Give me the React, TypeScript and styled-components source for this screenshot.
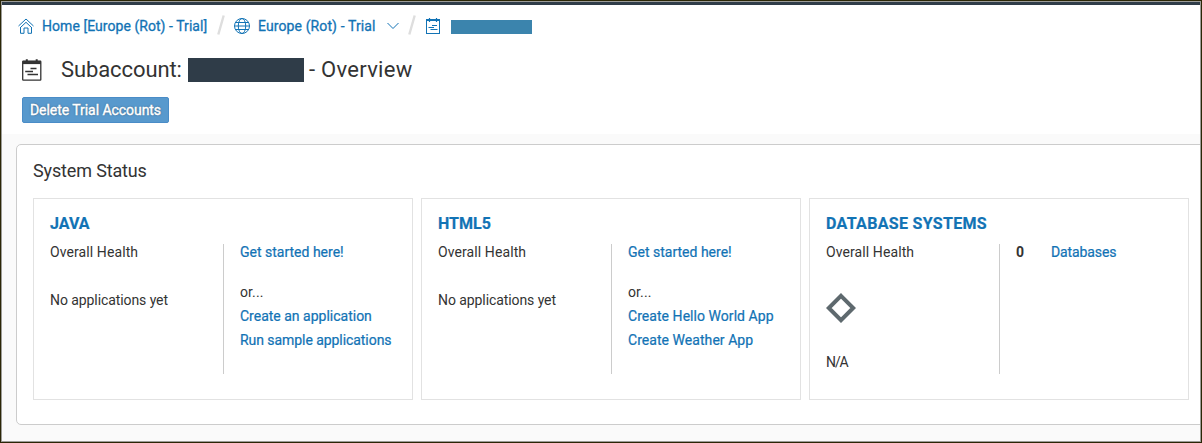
import React from "react";
import styled, { createGlobalStyle } from "styled-components";

const Global = createGlobalStyle`
  * { box-sizing: border-box; }
  body { margin: 0; background: #fff; font-family: Roboto, "Liberation Sans", sans-serif; font-size: 14px; color: #333; }
`;

const Frame = styled.div`
  height: 443px;
  border: 1px solid #2b2606;
  overflow: hidden;
`;

const Screen = styled.div`
  height: 441px;
  border: 1px solid #9c9c98;
  background: #fafafa;
  display: flex;
  flex-direction: column;
  overflow: hidden;
`;

const ShellBar = styled.div`
  height: 3px;
  flex: none;
  background: #2f3c48;
`;

const Header = styled.header`
  height: 129px;
  flex: none;
  background: #fff;
`;

const Breadcrumb = styled.nav`
  display: flex;
  align-items: center;
  height: 42px;
  padding-left: 16px;
  color: #1273b5;
`;

const Text = styled.span<{ $ls?: number }>`
  white-space: nowrap;
  letter-spacing: ${(p) => p.$ls ?? 0}px;
`;

const Crumb = styled(Text)<{ $w: number }>`
  width: ${(p) => p.$w}px;
  margin-left: 8px;
  -webkit-text-stroke: 0.3px currentColor;
`;

const Chevron = styled.svg`
  margin-left: 11px;
`;

const Separator = styled.svg`
  width: 8px;
  height: 20px;
  margin: -2px 9px 0 9px;
  flex: none;
`;

const Redacted = styled.span<{ $w: number; $h: number; $c: string; $ml?: number; $mt?: number }>`
  display: block;
  flex: none;
  width: ${(p) => p.$w}px;
  height: ${(p) => p.$h}px;
  margin-left: ${(p) => p.$ml ?? 0}px;
  margin-top: ${(p) => p.$mt ?? 0}px;
  background: ${(p) => p.$c};
`;

const TitleRow = styled.h1`
  display: flex;
  align-items: center;
  height: 44px;
  margin: 0;
  padding-left: 20px;
  font-size: 22px;
  font-weight: 400;
`;

const Title = styled(Text)<{ $ml: number; $w?: number }>`
  margin-left: ${(p) => p.$ml}px;
  ${(p) => (p.$w ? `width: ${p.$w}px;` : "")}
`;

const DeleteButton = styled.button`
  display: block;
  width: 147px;
  height: 26px;
  margin: 6px 0 0 20px;
  padding: 0;
  border: 1px solid #4a8cc7;
  border-radius: 2px;
  background: #5899cd;
  color: #fff;
  font: 14px Roboto, "Liberation Sans", sans-serif;
  letter-spacing: -0.05px;
  text-shadow: 0 0 2px rgba(0, 0, 0, 0.5);
  -webkit-text-stroke: 0.4px currentColor;
`;

const Panel = styled.section`
  margin: 10px 0 0 14px;
  width: 1200px;
  height: 281px;
  flex: none;
  border: 1px solid #ccc;
  border-radius: 5px;
  background: #fff;
  padding: 0 0 0 16px;
`;

const PanelTitle = styled.h2`
  margin: 0;
  height: 53px;
  line-height: 52px;
  font-size: 18px;
  font-weight: 400;
  letter-spacing: -0.15px;
`;

const Cards = styled.div`
  display: flex;
  gap: 8px;
`;

const Card = styled.article`
  width: 380px;
  height: 202px;
  border: 1px solid #e2e2e2;
  padding: 13px 16px 0;
`;

const CardTitle = styled.h3<{ $ls?: number }>`
  margin: 0;
  height: 24px;
  line-height: 24px;
  font-size: 16px;
  font-weight: 700;
  color: #1273b5;
  letter-spacing: ${(p) => p.$ls ?? 0}px;
  -webkit-text-stroke: 0.2px currentColor;
`;

const Columns = styled.div`
  display: flex;
  margin-top: 8px;
  height: 130px;
  line-height: 16px;
`;

const Health = styled.div`
  width: 173px;
  display: flex;
  flex-direction: column;
`;

const Details = styled.div`
  border-left: 1px solid #ccc;
  padding-left: 16px;
  display: flex;
  flex-direction: column;
`;

const Line = styled(Text)<{ $mt?: number }>`
  display: block;
  margin-top: ${(p) => p.$mt ?? 0}px;
`;

const Link = styled(Line)`
  color: #1273b5;
  -webkit-text-stroke: 0.22px currentColor;
`;

const CountRow = styled.div`
  display: flex;
`;

const Count = styled.b`
  width: 35px;
`;

const Diamond = styled.svg`
  margin-top: 33px;
`;

const Icon = styled.svg<{ $ml?: number; $mt?: number }>`
  flex: none;
  fill: none;
  margin-left: ${(p) => p.$ml ?? 0}px;
  margin-top: ${(p) => p.$mt ?? 0}px;
`;

const SmallCalendar = () => (
  <Icon $ml={1} width="14" height="16" viewBox="0 0 14 16" stroke="#1273b5">
    <rect x="0.500" y="1.500" width="13" height="14" />
    <path d="M1 2.500H13" />
    <path d="M3.500 0V4M10.500 0V4" strokeWidth="1.200" />
    <path d="M6 7.500H11M2.500 9.500H8M4.500 11.500H11.500" />
  </Icon>
);

const LargeCalendar = () => (
  <Icon $mt={2} width="20" height="22" viewBox="0 0 20 22" stroke="#333">
    <rect x="0.700" y="2.200" width="18.100" height="19" rx="0.600" strokeWidth="1.300" />
    <path d="M0.700 3.500H18.800" strokeWidth="3.200" />
    <path d="M4.800 0.200V3M14.700 0.200V3" strokeWidth="2" />
    <path d="M8.500 9.500H14.500M3.200 12.500H11M5.500 15.500H16" strokeWidth="1.300" />
  </Icon>
);

const Slash = () => (
  <Separator viewBox="0 0 8 20">
    <path d="M6.700 0.500L1.300 19.500" stroke="#dedede" strokeWidth="2.400" />
  </Separator>
);

export default function App() {
  return (
    <Frame>
      <Global />
      <Screen>
        <ShellBar />
        <Header>
          <Breadcrumb>
            <Icon width="16" height="16" viewBox="0 0 16 16" stroke="#1273b5">
              <path d="M0.500 8L8 1L15.500 8M2.500 9V15.300H6V10H10V15.300H13.500V9M2.800 9.200L8 4.300L13.200 9.200" />
            </Icon>
            <Crumb $w={166} $ls={0.05}>Home [Europe (Rot) - Trial]</Crumb>
            <Slash />
            <Icon width="16" height="16" viewBox="0 0 16 16" stroke="#1273b5">
              <circle cx="8" cy="8" r="7.500" />
              <ellipse cx="8" cy="8" rx="3.700" ry="7.500" />
              <path d="M1.500 4.500H14.500M0.500 8H15.500M1.500 11.500H14.500" />
            </Icon>
            <Crumb $w={118} $ls={0.11}>Europe (Rot) - Trial</Crumb>
            <Chevron width="12" height="8" viewBox="0 0 12 8" fill="none" stroke="#1273b5">
              <path d="M0.500 1L6 6.500L11.500 1" />
            </Chevron>
            <Slash />
            <SmallCalendar />
            <Redacted $w={81} $h={14} $c="#3b84ad" $ml={11} $mt={2} />
          </Breadcrumb>
          <TitleRow>
            <LargeCalendar />
            <Title $ml={19} $w={127} $ls={-0.1}>Subaccount:</Title>
            <Redacted $w={116} $h={24} $c="#2f3c48" $mt={2} />
            <Title $ml={5} $ls={0.28}>- Overview</Title>
          </TitleRow>
          <DeleteButton>Delete Trial Accounts</DeleteButton>
        </Header>
        <Panel>
          <PanelTitle>System Status</PanelTitle>
          <Cards>
            <Card>
              <CardTitle>JAVA</CardTitle>
              <Columns>
                <Health>
                  <Line $ls={0.09}>Overall Health</Line>
                  <Line $mt={32} $ls={-0.08}>No applications yet</Line>
                </Health>
                <Details>
                  <Link>Get started here!</Link>
                  <Line $mt={24} $ls={0.1}>or...</Line>
                  <Link $mt={8}>Create an application</Link>
                  <Link $mt={8} $ls={-0.06}>Run sample applications</Link>
                </Details>
              </Columns>
            </Card>
            <Card>
              <CardTitle>HTML5</CardTitle>
              <Columns>
                <Health>
                  <Line $ls={0.09}>Overall Health</Line>
                  <Line $mt={32} $ls={-0.08}>No applications yet</Line>
                </Health>
                <Details>
                  <Link>Get started here!</Link>
                  <Line $mt={24} $ls={0.1}>or...</Line>
                  <Link $mt={8} $ls={0.05}>Create Hello World App</Link>
                  <Link $mt={8} $ls={0.05}>Create Weather App</Link>
                </Details>
              </Columns>
            </Card>
            <Card>
              <CardTitle $ls={0.32}>DATABASE SYSTEMS</CardTitle>
              <Columns>
                <Health>
                  <Line $ls={0.09}>Overall Health</Line>
                  <Diamond width="30" height="30" viewBox="0 0 30 30">
                    <path d="M15 2.800L27.200 15L15 27.200L2.800 15Z" fill="none" stroke="#5e696e" strokeWidth="4" />
                  </Diamond>
                  <Line $mt={31} $ls={-1.1}>N/A</Line>
                </Health>
                <Details>
                  <CountRow>
                    <Count>0</Count>
                    <Link $ls={-0.1}>Databases</Link>
                  </CountRow>
                </Details>
              </Columns>
            </Card>
          </Cards>
        </Panel>
      </Screen>
    </Frame>
  );
}
